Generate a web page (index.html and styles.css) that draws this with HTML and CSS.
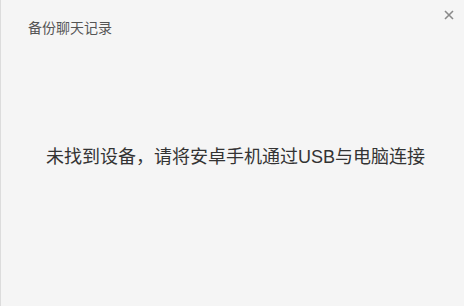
FILE: index.html
```html
<!DOCTYPE html>
<html lang="zh-CN">
<head>
<meta charset="utf-8">
<link rel="stylesheet" href="styles.css">
</head>
<body>
<div class="dialog">
  <div class="header">
    <span class="title">备份聊天记录</span>
    <span class="close" aria-label="关闭">
      <svg width="10" height="10" viewBox="0 0 10 10"><path d="M1 1L9 9M9 1L1 9" stroke="#8a8a8a" stroke-width="1.6" fill="none"/></svg>
    </span>
  </div>
  <div class="body">
    <p class="message">未找到设备，请将安卓手机通过USB与电脑连接</p>
  </div>
</div>
</body>
</html>
```
FILE: styles.css
```css
html, body {
  margin: 0;
  padding: 0;
  width: 464px;
  height: 306px;
  overflow: hidden;
}
body {
  background: #f5f5f5;
  font-family: "Liberation Sans", "Noto Sans CJK SC", sans-serif;
}
.dialog {
  box-sizing: border-box;
  width: 464px;
  height: 306px;
  border-left: 1px solid #dcdcdc;
  background: #f5f5f5;
  display: flex;
  flex-direction: column;
}
.header {
  position: relative;
  height: 56px;
  padding: 18px 0 0 27px;
  box-sizing: border-box;
}
.title {
  font-size: 14px;
  color: #555555;
  line-height: 20px;
}
.close {
  position: absolute;
  top: 10px;
  right: 10px;
  width: 10px;
  height: 10px;
  display: block;
}
.close svg { display: block; }
.body {
  flex: 1;
  display: flex;
  justify-content: center;
  padding-top: 89px;
  box-sizing: border-box;
}
.message {
  margin: 0;
  font-size: 18px;
  line-height: 24px;
  color: #333333;
  padding-left: 6px;
}
```
